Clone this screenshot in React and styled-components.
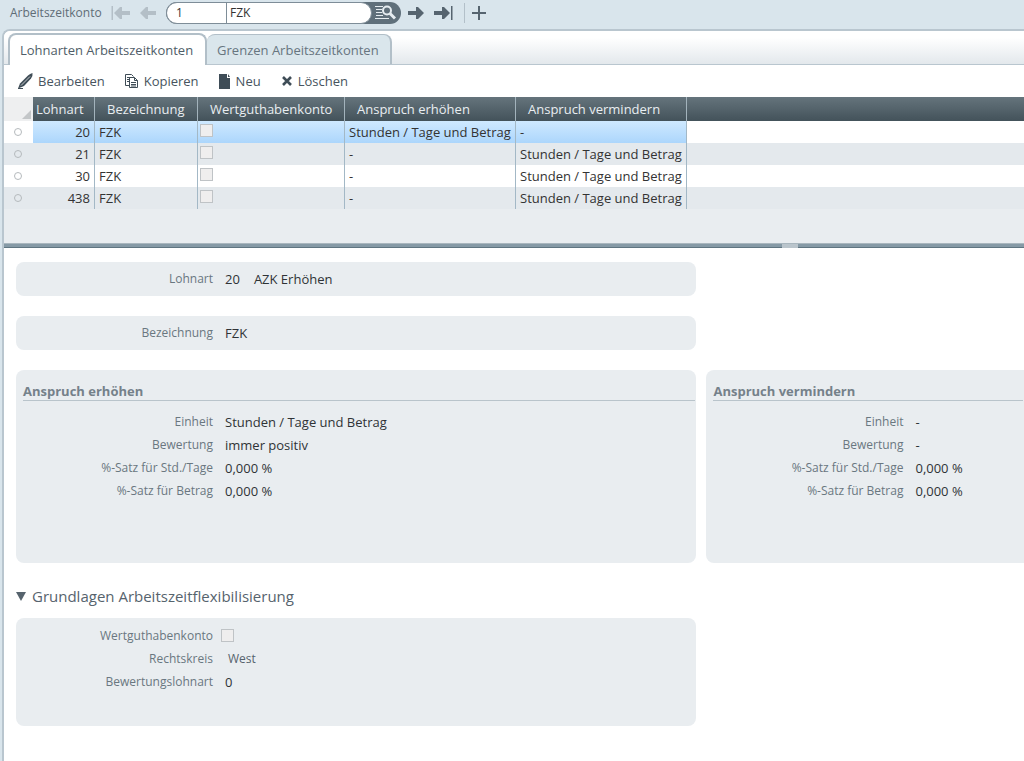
import React, { useState } from 'react';
import styled, { createGlobalStyle } from 'styled-components';

const GlobalStyle = createGlobalStyle`
    * {
        box-sizing: border-box;
    }

    body {
        margin: 0;
        background: #d9e5ec;
        color: #333;
        font-family: "Open Sans", "Noto Sans", sans-serif;
        font-size: 13px;
        line-height: 18px;
    }

    button, input {
        font: inherit;
        color: inherit;
    }
`

const Page = styled.div`
    display: flex;
    flex-direction: column;
    min-height: 100vh;
    padding-left: 2px;
    overflow: hidden;
`

const TopBar = styled.header`
    display: flex;
    align-items: center;
    height: 29px;
    padding: 0 8px 3px;
    color: #5f6d77;
`

const KontoLabel = styled.label`
    width: 98px;
    font-size: 12px;
    white-space: nowrap;
`

const NavButton = styled.button`
    display: flex;
    align-items: center;
    justify-content: center;
    width: 26px;
    height: 22px;
    padding: 0;
    border: 0;
    background: none;
    color: #56646f;

    &:disabled {
        color: #b4bfc7;
    }
`

const SearchGroup = styled.div`
    display: flex;
    height: 22px;
    margin: 0 3px 0 6px;
    padding-right: 2px;
    border-radius: 11px;
    background: #60707b;
`

const SearchFields = styled.div`
    display: flex;
    border: 1px solid #7e8d98;
    border-radius: 11px;
    background: #fff;
    overflow: hidden;
`

const SearchInput = styled.input`
    width: ${props => props.$width}px;
    padding: 0 ${props => props.$pad}px;
    border: 0;
    border-left: ${props => props.$divided ? '1px solid #7e8d98' : '0'};
    background: none;
    font-size: 12px;
    color: #333;
    outline: 0;
`

const SearchButton = styled.button`
    display: flex;
    align-items: center;
    width: 27px;
    padding: 0 0 0 3px;
    border: 0;
    background: none;
    color: #e6edf1;
`

const Divider = styled.span`
    width: 1px;
    height: 20px;
    margin: 0 1px 0 8px;
    background: #b3c0c9;
`

const Frame = styled.main`
    display: flex;
    flex: 1;
    flex-direction: column;
    border-top: 2px solid #b9c6cf;
    border-left: 2px solid #b9c6cf;
    border-top-left-radius: 8px;
    background: #fff;
    overflow: hidden;
`

const TabStrip = styled.div`
    display: flex;
    align-items: flex-end;
    height: 34px;
    padding: 2px 4px 0;
    border-bottom: 1px solid #b9c6cf;
    background: linear-gradient(#fff 20%, #e3e8ec);
`

const Tab = styled.button`
    height: ${props => props.$active ? 32 : 30}px;
    margin-bottom: ${props => props.$active ? -1 : 0}px;
    padding: 0 ${props => props.$active ? 12 : 11}px 0 10px;
    border: 1px solid #b2bfc8;
    border-width: ${props => props.$active ? '2px 2px 0' : '1px 2px 0 0'};
    border-radius: 8px 8px 0 0;
    background: ${props => props.$active ? '#fff' : '#dae6ec'};
    color: ${props => props.$active ? '#4f5d68' : '#67757f'};
    white-space: nowrap;
`

const Toolbar = styled.div`
    display: flex;
    gap: 20px;
    height: 32px;
    padding: 0 14px;
`

const ToolButton = styled.button`
    display: flex;
    align-items: center;
    gap: 5px;
    padding: 0;
    border: 0;
    background: none;
    color: #47545e;

    svg {
        flex: none;
        color: #3f4d57;
    }
`

const GridArea = styled.section`
    padding-bottom: 34px;
    background: #e9edf0;
`

const Grid = styled.table`
    width: 100%;
    border-collapse: separate;
    border-spacing: 0;
    table-layout: fixed;
`

const HeadCell = styled.th`
    height: 24px;
    padding: 0 ${props => props.$narrow ? 3 : 12}px;
    border-right: 1px solid ${props => props.$last ? 'transparent' : '#a3b3bc'};
    background: linear-gradient(#65747c, #43525a);
    color: #e9eef1;
    font-weight: normal;
    text-align: left;
    white-space: nowrap;
`

const CornerCell = styled.th`
    height: 24px;
    padding: 0 2px 2px 0;
    background: #eeeff0;
    vertical-align: bottom;

    svg {
        display: block;
        margin-left: auto;
    }
`

const Row = styled.tr`
    background: ${props => props.$odd ? '#e4e9ed' : '#fff'};
`

const Cell = styled.td`
    height: 22px;
    padding: 0 4px;
    border-right: 1px solid #a3b8c6;
    background: ${props => props.$selected ? 'linear-gradient(#cfe9ff, #acd6fc)' : 'none'};
    text-align: ${props => props.$right ? 'right' : 'left'};
    white-space: nowrap;
`

const PlainCell = styled.td`
    height: 22px;
    padding: 0 0 0 10px;

    input {
        display: block;
    }
`

const RowMarker = styled.input`
    appearance: none;
    width: 8px;
    height: 8px;
    margin: 0;
    border: 1px solid #b5babd;
    border-radius: 50%;
`

const CheckBox = styled.input`
    appearance: none;
    display: block;
    width: 13px;
    height: 13px;
    margin: 0;
    border: 1px solid #bfc3c6;
    background: #efeeee;
`

const CheckCell = styled(Cell)`
    padding: 0 2px 3px;
`

const Splitter = styled.div`
    height: 5px;
    border-top: 1px solid #a9b6be;
    border-bottom: 1px solid #5f7581;
    background: #869aa6;
`

const Grip = styled.div`
    width: 16px;
    height: 4px;
    margin-left: 76.3%;
    background: #bac5cc;
`

const Detail = styled.section`
    display: grid;
    grid-template-columns: 15fr 7fr;
    column-gap: 10px;
    padding: 14px 0 36px 12px;
`

const Card = styled.div`
    grid-column: ${props => props.$column || 1};
    min-height: ${props => props.$height}px;
    margin-bottom: 20px;
    padding: ${props => props.$pad || 0}px 0 0;
    border-radius: ${props => props.$column === 2 ? '8px 0 0 8px' : '8px'};
    background: #e9edf0;
`

const CardTitle = styled.h2`
    margin: 0 1px 9px 7px;
    border-bottom: 1px solid #b9c4cb;
    color: #75818a;
    font-size: 13px;
    line-height: 17px;
`

const Field = styled.div`
    display: flex;
    align-items: center;
    height: ${props => props.$tall ? 34 : 23}px;
    white-space: nowrap;
`

const FieldLabel = styled.label`
    width: 197px;
    margin-right: ${props => props.$tight ? 8 : 12}px;
    color: #697780;
    font-size: 12px;
    text-align: right;
`

const Value = styled.output`
    margin-right: 14px;
    padding-left: ${props => props.$muted ? 3 : 0}px;
    color: ${props => props.$muted ? '#56636d' : '#2f3336'};
    font-size: ${props => props.$muted ? 12 : 13}px;
`

const SectionToggle = styled.button`
    grid-column: 1 / -1;
    display: flex;
    align-items: center;
    gap: 6px;
    height: 22px;
    margin: 2px 0 11px;
    padding: 0;
    border: 0;
    background: none;
    color: #56636d;
    font-size: 15px;
`

const ArrowIcon = ({ left, stop }) => (
    <svg width="20" height="14" viewBox="0 0 20 14" fill="currentColor" aria-hidden="true">
        <g transform={left ? 'translate(20 0) scale(-1 1)' : undefined}>
            <path d="M1 5h8V1h2l6 6-6 6H9V9H1z" />
            {stop && <path d="M18 0h1.500v14H18z" />}
        </g>
    </svg>
);

const PlusIcon = () => (
    <svg width="14" height="14" viewBox="0 0 14 14" fill="currentColor" aria-hidden="true">
        <path d="M6 0h2v6h6v2H8v6H6V8H0V6h6z" />
    </svg>
);

const SearchIcon = () => (
    <svg width="22" height="16" viewBox="0 0 22 16" fill="none" stroke="currentColor" aria-hidden="true">
        <path d="M0 1.500h8M1 4.500h6M1 7.500h6M1 10.500h7M0 13.500h14" />
        <circle cx="12" cy="5.500" r="4" strokeWidth="2" fill="#60707b" />
        <path d="M15 8.500l5 5" strokeWidth="3" />
    </svg>
);

const PenIcon = () => (
    <svg width="15" height="16" viewBox="0 0 15 16" fill="currentColor" aria-hidden="true">
        <path d="M0 15.500L2 10.500 10 2.500Q12 .5 14.500 0 15 3 13 5.500L6 13z" />
        <path d="M3 12.500L12 3.500" stroke="#fff" strokeWidth=".7" />
        <path d="M0 15h5v1H0z" />
    </svg>
);

const CopyIcon = () => (
    <svg width="14" height="15" viewBox="0 0 14 15" fill="none" stroke="currentColor" aria-hidden="true">
        <path d="M4.500 11.500h-4v-11h6l2 2M2 3.500h3M2 5.500h2M2 7.500h2" />
        <path d="M4.500 3.500h5l3 3v7h-8z" fill="#fff" />
        <path d="M9.500 3.500v3h3M6 8.500h5M6 10.500h5M6 12h5" />
    </svg>
);

const PageIcon = () => (
    <svg width="12" height="15" viewBox="0 0 12 15" fill="currentColor" aria-hidden="true">
        <path d="M0 0h8v4h3v11H0zM9 0l2 3H9z" />
    </svg>
);

const CrossIcon = () => (
    <svg width="12" height="12" viewBox="0 0 12 12" stroke="currentColor" strokeWidth="2.600" aria-hidden="true">
        <path d="M2 2l8 8M10 2l-8 8" />
    </svg>
);

const columns = ['Lohnart', 'Bezeichnung', 'Wertguthabenkonto', 'Anspruch erhöhen', 'Anspruch vermindern'];

const lohnarten = [
    { nr: 20, name: 'FZK', plus: 'Stunden / Tage und Betrag', minus: '-' },
    { nr: 21, name: 'FZK', plus: '-', minus: 'Stunden / Tage und Betrag' },
    { nr: 30, name: 'FZK', plus: '-', minus: 'Stunden / Tage und Betrag' },
    { nr: 438, name: 'FZK', plus: '-', minus: 'Stunden / Tage und Betrag' },
];

const AnspruchCard = ({ id, title, column, einheit, bewertung }) => {
    const fields = [
        ['Einheit', einheit],
        ['Bewertung', bewertung],
        ['%-Satz für Std./Tage', '0,000 %'],
        ['%-Satz für Betrag', '0,000 %'],
    ];

    return (
        <Card $column={column} $height={193} $pad={13}>
            <CardTitle>{title}</CardTitle>
            {fields.map(([label, value], i) => (
                <Field key={label}>
                    <FieldLabel htmlFor={id + i}>{label}</FieldLabel>
                    <Value id={id + i}>{value}</Value>
                </Field>
            ))}
        </Card>
    )
};

const App = () => {
    const [selected, setSelected] = useState(20);
    const [tab, setTab] = useState(0);
    const [open, setOpen] = useState(true);

    return (
    <>
        <GlobalStyle />
        <Page>
            <TopBar>
                <KontoLabel htmlFor="konto">Arbeitszeitkonto</KontoLabel>
                <NavButton disabled title="Erster"><ArrowIcon left stop /></NavButton>
                <NavButton disabled title="Zurück"><ArrowIcon left /></NavButton>
                <SearchGroup>
                    <SearchFields>
                        <SearchInput id="konto" defaultValue="1" $width={59} $pad={9} />
                        <SearchInput aria-label="Name" defaultValue="FZK" $width={145} $pad={3} $divided />
                    </SearchFields>
                    <SearchButton title="Suchen"><SearchIcon /></SearchButton>
                </SearchGroup>
                <NavButton title="Weiter"><ArrowIcon /></NavButton>
                <NavButton title="Letzter"><ArrowIcon stop /></NavButton>
                <Divider />
                <NavButton title="Hinzufügen"><PlusIcon /></NavButton>
            </TopBar>
            <Frame>
                <TabStrip role="tablist">
                    {['Lohnarten Arbeitszeitkonten', 'Grenzen Arbeitszeitkonten'].map((name, i) => (
                        <Tab key={name} role="tab" aria-selected={tab === i} $active={tab === i} onClick={() => setTab(i)}>
                            {name}
                        </Tab>
                    ))}
                </TabStrip>
                <Toolbar>
                    <ToolButton><PenIcon />Bearbeiten</ToolButton>
                    <ToolButton><CopyIcon />Kopieren</ToolButton>
                    <ToolButton><PageIcon />Neu</ToolButton>
                    <ToolButton><CrossIcon />Löschen</ToolButton>
                </Toolbar>
                <GridArea>
                    <Grid>
                        <colgroup>
                            <col width="29" />
                            <col width="62" />
                            <col width="103" />
                            <col width="147" />
                            <col width="171" />
                            <col width="171" />
                            <col />
                        </colgroup>
                        <thead>
                            <tr>
                                <CornerCell>
                                    <svg width="9" height="9" aria-hidden="true"><path d="M9 0v9H0z" fill="#c3c6c8" /></svg>
                                </CornerCell>
                                {columns.map((name, i) => <HeadCell key={name} $narrow={i === 0}>{name}</HeadCell>)}
                                <HeadCell $last />
                            </tr>
                        </thead>
                        <tbody>
                            {lohnarten.map((row, i) => (
                                <Row key={row.nr} $odd={i % 2 === 1} onClick={() => setSelected(row.nr)}>
                                    <PlainCell>
                                        <RowMarker
                                            type="radio"
                                            name="zeile"
                                            aria-label={`Zeile ${row.nr}`}
                                            checked={selected === row.nr}
                                            onChange={() => setSelected(row.nr)}
                                        />
                                    </PlainCell>
                                    <Cell $right $selected={selected === row.nr}>{row.nr}</Cell>
                                    <Cell $selected={selected === row.nr}>{row.name}</Cell>
                                    <CheckCell $selected={selected === row.nr}>
                                        <CheckBox type="checkbox" disabled aria-label="Wertguthabenkonto" />
                                    </CheckCell>
                                    <Cell $selected={selected === row.nr}>{row.plus}</Cell>
                                    <Cell $selected={selected === row.nr}>{row.minus}</Cell>
                                    <PlainCell />
                                </Row>
                            ))}
                        </tbody>
                    </Grid>
                </GridArea>
                <Splitter><Grip /></Splitter>
                <Detail>
                    <Card $height={34}>
                        <Field $tall>
                            <FieldLabel htmlFor="lohnart">Lohnart</FieldLabel>
                            <Value id="lohnart">20</Value>
                            <Value>AZK Erhöhen</Value>
                        </Field>
                    </Card>
                    <Card $height={34}>
                        <Field $tall>
                            <FieldLabel htmlFor="bezeichnung">Bezeichnung</FieldLabel>
                            <Value id="bezeichnung">FZK</Value>
                        </Field>
                    </Card>
                    <AnspruchCard
                        id="plus"
                        title="Anspruch erhöhen"
                        column={1}
                        einheit="Stunden / Tage und Betrag"
                        bewertung="immer positiv"
                    />
                    <AnspruchCard id="minus" title="Anspruch vermindern" column={2} einheit="-" bewertung="-" />
                    <SectionToggle aria-expanded={open} onClick={() => setOpen(!open)}>
                        <svg width="10" height="9" aria-hidden="true"><path d="M0 0h10L5 9z" fill="currentColor" /></svg>
                        Grundlagen Arbeitszeitflexibilisierung
                    </SectionToggle>
                    {open && (
                        <Card $height={108} $pad={6}>
                            <Field>
                                <FieldLabel htmlFor="wgk" $tight>Wertguthabenkonto</FieldLabel>
                                <CheckBox id="wgk" type="checkbox" disabled />
                            </Field>
                            <Field>
                                <FieldLabel htmlFor="kreis">Rechtskreis</FieldLabel>
                                <Value id="kreis" $muted>West</Value>
                            </Field>
                            <Field>
                                <FieldLabel htmlFor="bewlohn">Bewertungslohnart</FieldLabel>
                                <Value id="bewlohn">0</Value>
                            </Field>
                        </Card>
                    )}
                </Detail>
            </Frame>
        </Page>
    </>
    )
};

export default App;
